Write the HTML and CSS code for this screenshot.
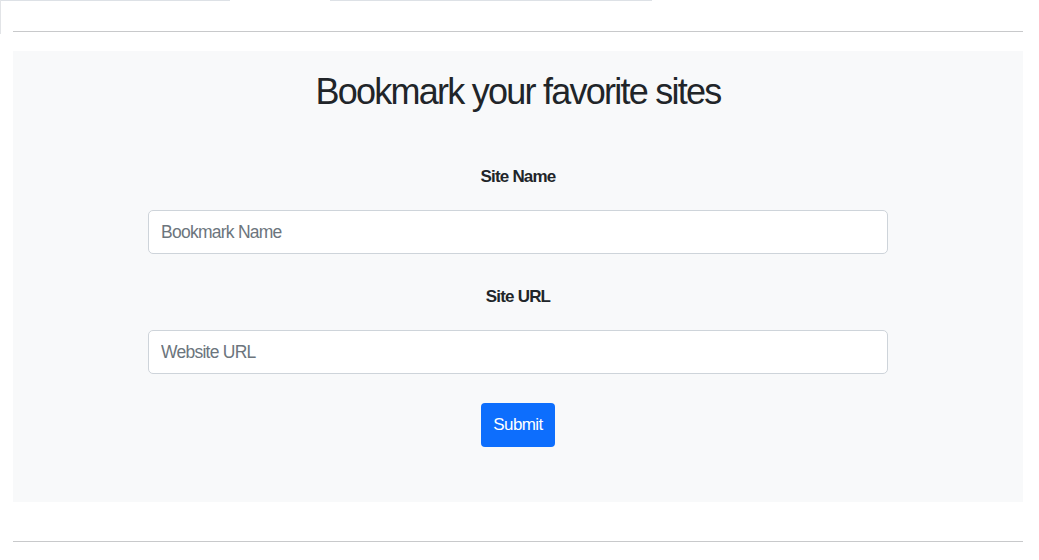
FILE: index.html
```html
<!DOCTYPE html>
<html lang="en">
<head>
<meta charset="utf-8">
<title>Bookmark</title>
<link rel="stylesheet" href="styles.css">
</head>
<body>
<div class="top">
  <div class="top-edge">
    <span class="seg seg-a"></span>
    <span class="seg-gap"></span>
    <span class="seg seg-b"></span>
  </div>
  <span class="side-mark"></span>
</div>
<main class="page">
  <hr class="rule">
  <section class="panel">
    <h2 class="title">Bookmark your favorite sites</h2>
    <form class="form">
      <label class="label" for="siteName">Site Name</label>
      <input class="field" id="siteName" type="text" placeholder="Bookmark Name">
      <label class="label label-url" for="siteUrl">Site URL</label>
      <input class="field" id="siteUrl" type="text" placeholder="Website URL">
      <button class="btn" type="button">Submit</button>
    </form>
  </section>
  <hr class="rule rule-bottom">
</main>
</body>
</html>
```

FILE: styles.css
```css
* { box-sizing: border-box; }

html, body {
  margin: 0;
  padding: 0;
  background: #ffffff;
}

body {
  font-family: "Liberation Sans", Arial, sans-serif;
  color: #212529;
  width: 1039px;
  height: 560px;
  overflow: hidden;
  position: relative;
}

.top {
  height: 31px;
  position: relative;
}

.top-edge {
  display: flex;
  height: 1px;
}

.seg { height: 1px; background: #dde1e6; display: block; }
.seg-a { width: 230px; }
.seg-gap { width: 100px; }
.seg-b { width: 322px; }

.side-mark {
  position: absolute;
  left: 0;
  top: 0;
  width: 1px;
  height: 34px;
  background: #e2e4e7;
}

.page {
  padding: 0 16px 0 13px;
}

.rule {
  margin: 0;
  border: 0;
  height: 1px;
  background: #c8c9cb;
}

.panel {
  margin-top: 19px;
  background: #f8f9fa;
  padding: 20px 0 55px;
  display: flex;
  flex-direction: column;
  align-items: center;
}

.title {
  margin: 0;
  height: 42px;
  font-size: 36px;
  line-height: 42px;
  font-weight: 400;
  letter-spacing: -1.75px;
  color: #212529;
}

.form {
  margin-top: 49px;
  display: flex;
  flex-direction: column;
  align-items: center;
  width: 740px;
}

.label {
  height: 25px;
  line-height: 29px;
  font-size: 17px;
  font-weight: 700;
  letter-spacing: -0.8px;
  color: #212529;
  margin-bottom: 23px;
}

.label-url { margin-top: 28px; }

.field {
  width: 740px;
  height: 44px;
  padding: 0 12px;
  border: 1px solid #ced4da;
  border-radius: 5px;
  background: #ffffff;
  font-family: "Liberation Sans", Arial, sans-serif;
  font-size: 17.5px;
  letter-spacing: -0.75px;
  color: #212529;
  outline: none;
}

.field::placeholder { color: #6c757d; opacity: 1; }

.btn {
  margin-top: 29px;
  width: 74px;
  height: 44px;
  padding: 0;
  border: 0;
  border-radius: 4px;
  background: #0d6efd;
  color: #ffffff;
  font-family: "Liberation Sans", Arial, sans-serif;
  font-size: 17px;
  letter-spacing: -0.6px;
  cursor: pointer;
}

.rule-bottom {
  margin-top: 39px;
}
```
